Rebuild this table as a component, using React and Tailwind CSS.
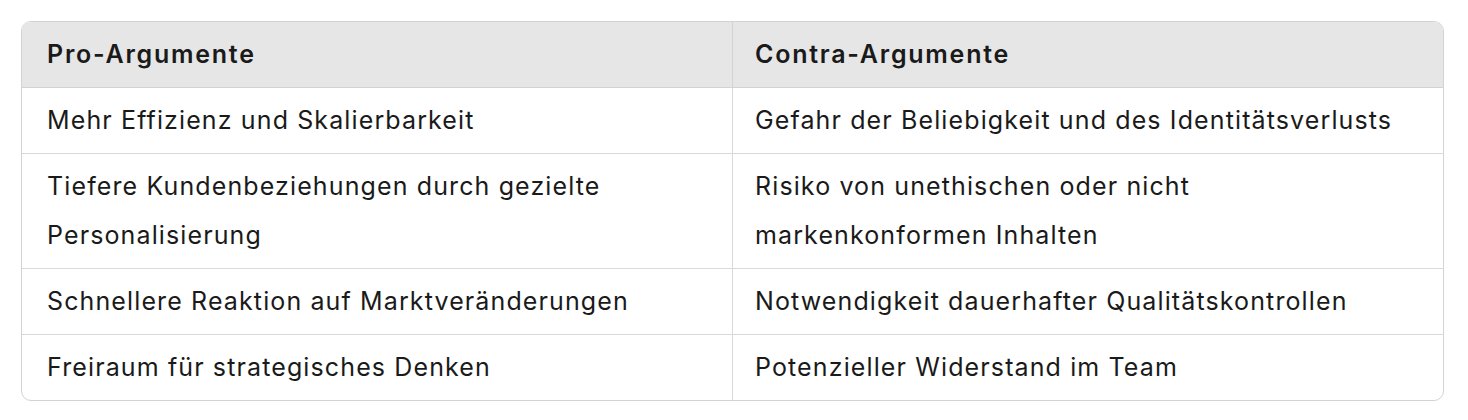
const rows = [
  ['Mehr Effizienz und Skalierbarkeit', 'Gefahr der Beliebigkeit und des Identitätsverlusts'],
  ['Tiefere Kundenbeziehungen durch gezielte Personalisierung', 'Risiko von unethischen oder nicht markenkonformen Inhalten'],
  ['Schnellere Reaktion auf Marktveränderungen', 'Notwendigkeit dauerhafter Qualitätskontrollen'],
  ['Freiraum für strategisches Denken', 'Potenzieller Widerstand im Team'],
];

const App = () => {
  return (
    <div className="bg-white pl-[21px] pt-[21px] font-['Inter','Liberation_Sans',sans-serif]">
      <div className="w-[1423px] overflow-hidden rounded-[10px] border border-[#d3d3d3]">
        <table className="w-full table-fixed border-collapse text-left text-[25px] leading-[49px] tracking-[1.12px] text-[#1a1a1a]">
          <thead className="bg-[#e6e6e6]">
            <tr>
              <th className="w-1/2 border-b border-r border-[#d3d3d3] pl-[25px] pr-6 py-2 font-semibold tracking-[1.75px]">Pro-Argumente</th>
              <th className="w-1/2 border-b border-[#d3d3d3] pl-[22px] pr-6 py-2 font-semibold tracking-[1.75px]">Contra-Argumente</th>
            </tr>
          </thead>
          <tbody>
            {rows.map((row, i) => (
              <tr key={i} className={i < rows.length - 1 ? 'border-b border-[#d9d9d9]' : ''}>
                <td className="border-r border-[#d9d9d9] pl-[25px] pr-6 py-2 align-middle">{row[0]}</td>
                <td className="pl-[22px] pr-6 py-2 align-middle">{row[1]}</td>
              </tr>
            ))}
          </tbody>
        </table>
      </div>
    </div>
  );
};

export default App;
